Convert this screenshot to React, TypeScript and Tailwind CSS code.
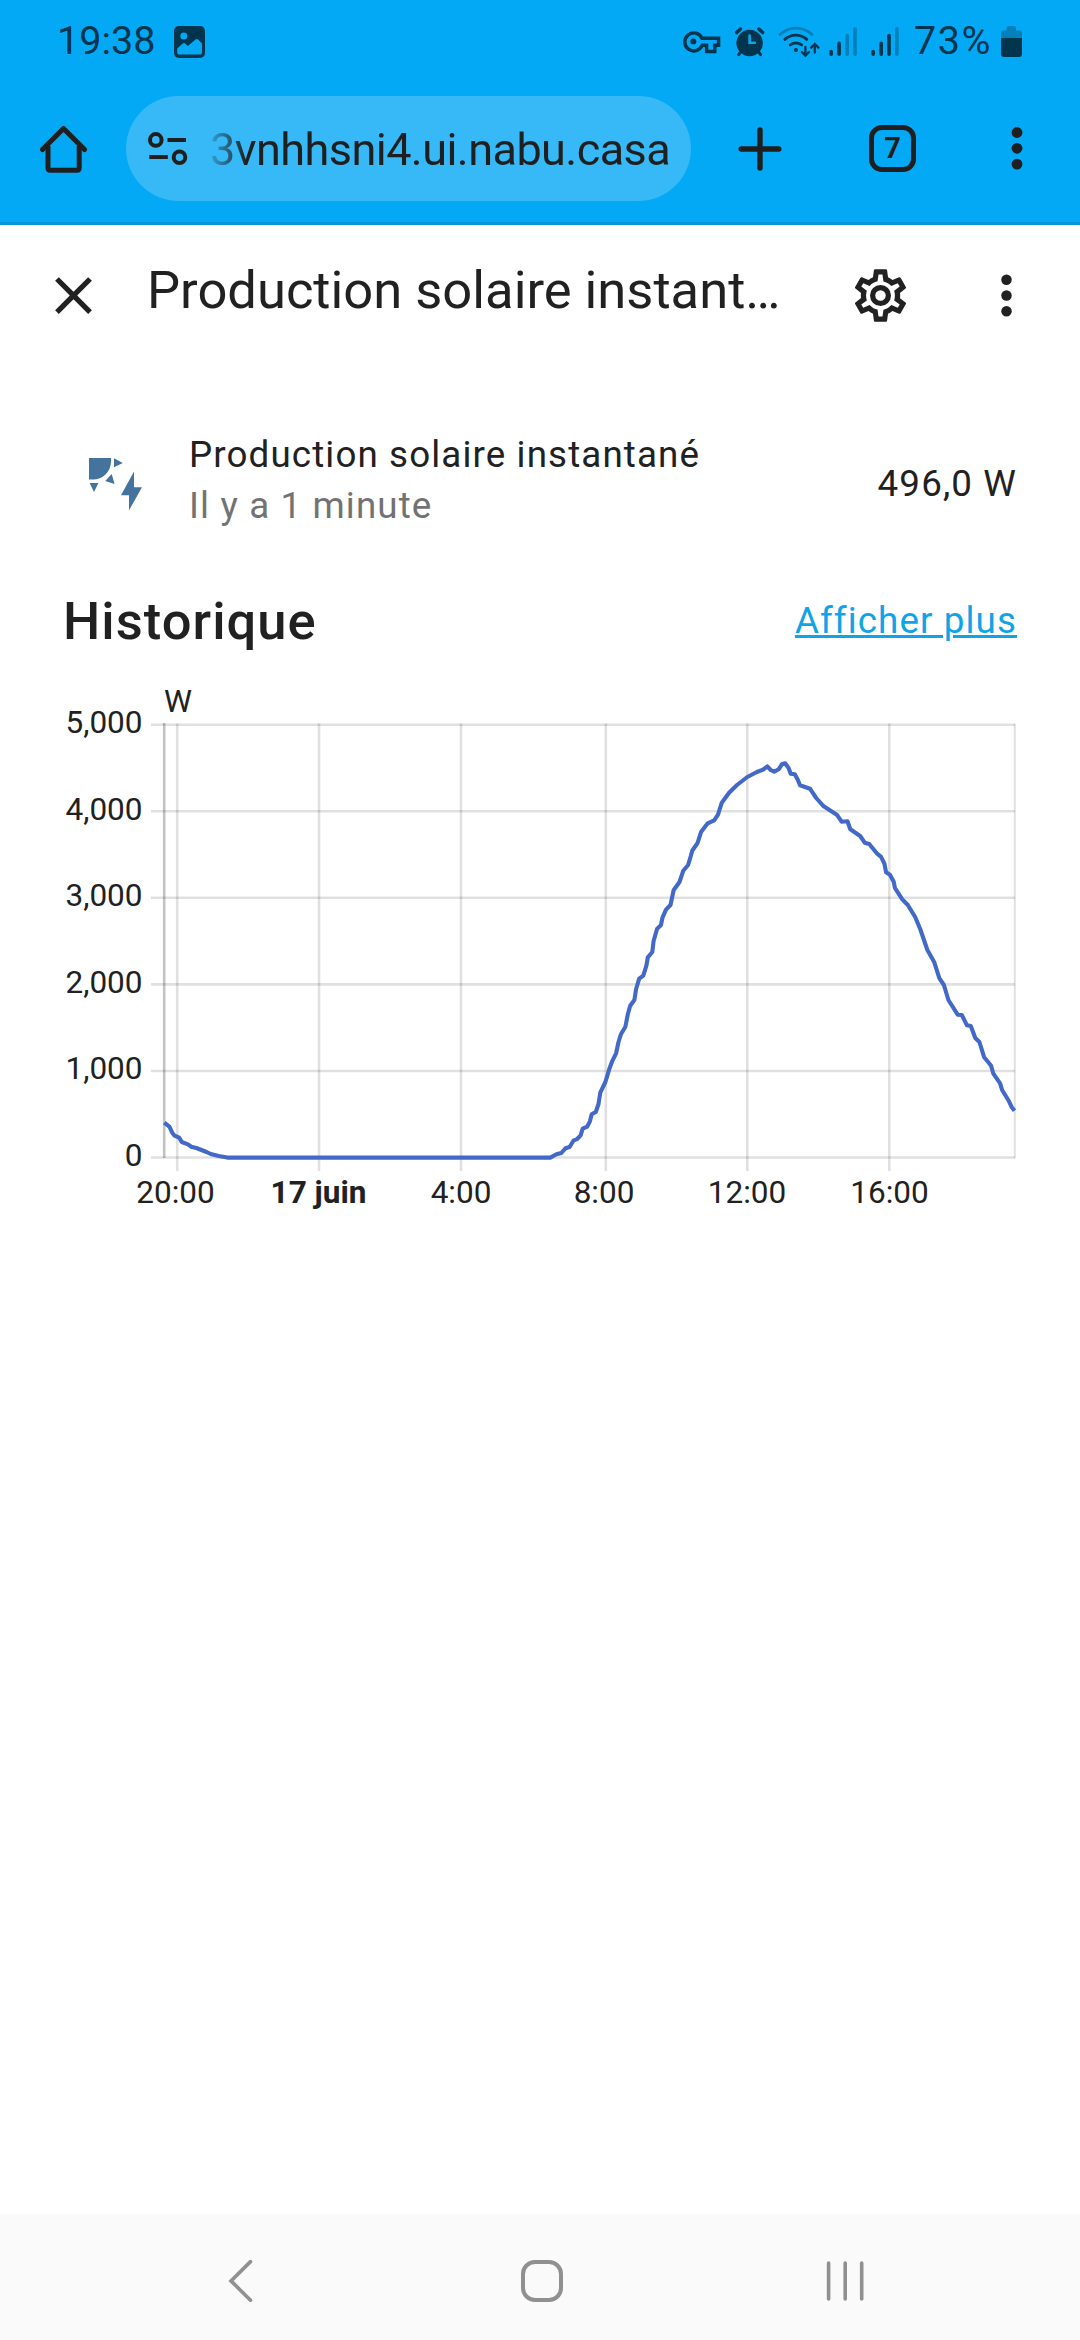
const verticalLines = [177.2, 319, 461, 605.8, 747.3, 889.3];

const yLabels = [
  { label: "5,000", y: 724.7 },
  { label: "4,000", y: 811.2 },
  { label: "3,000", y: 897.8 },
  { label: "2,000", y: 984.4 },
  { label: "1,000", y: 1071 },
  { label: "0", y: 1157.5 },
];

const xLabels = [
  { label: "20:00", x: 175.5 },
  { label: "17 juin", x: 318.5, bold: true },
  { label: "4:00", x: 461 },
  { label: "8:00", x: 604 },
  { label: "12:00", x: 747 },
  { label: "16:00", x: 889.5 },
];

const points =
  "164.3,1122.7 169.4,1126.7 172.2,1132.7 174.6,1135.7 179.1,1137.7 181.8,1142 188,1144.3 191.1,1146.7 196.3,1148 206.6,1152 210.7,1154 218.7,1156 227.3,1157.6 " +
  "550.3,1157.6 556.5,1154.3 561.3,1153 565.5,1148.3 569.6,1147 573.4,1140.7 577.2,1139 580.6,1135.3 582.7,1128.7 587.2,1126.7 589.9,1121.3 591.7,1114.3 595.8,1112 598.5,1104 600.3,1092.7 605.4,1082 " +
  "609.2,1069.3 612,1061.7 616.1,1053.3 618.5,1042 620.9,1034.3 625.4,1026.7 627.8,1014.3 630.2,1005.7 634.4,1000 636.1,989 639.2,978.7 643.3,975.7 646.4,965.7 647.8,957.3 652.3,952 653.6,941 657.1,928.7 " +
  "660.9,925.3 662.6,917.3 666,909.7 670.5,905 673.6,890.3 679.5,882 683.3,870.7 688.1,865 690.8,856 692.2,850.7 697.4,843.3 701.2,831.7 707.7,823.3 714.2,820.3 718,814.7 721.8,802.7 729.1,792.7 737,785 " +
  "747.3,777 756.9,772 763.1,769.7 767.3,766.3 770.7,770 774.2,771.7 778.6,769.3 782.1,764 785.2,763.3 788.6,768 790.7,773.7 794.8,774.3 797.9,780 800,785.3 810,788.7 816.2,798 823.7,806.3 836.8,814.7 " +
  "841.6,821.7 847.5,821.3 850.3,829.3 860.2,836 864.7,842.7 869.2,844 876.8,853.3 880.9,856.7 884.4,863.7 886.1,872.3 889.9,874.7 893.7,881.7 894.9,887.8 902.3,899.3 907.8,905 915.3,917.3 920.2,929 " +
  "927.4,950 934.3,962.3 939.4,978.3 943.9,985 948.4,1000 957.7,1014.7 961.8,1015 967,1025.3 970.8,1026 975.3,1038 979.4,1042 984.2,1057.3 991.1,1065.7 993.2,1073.3 1000.1,1083.3 1002.1,1090 1009,1101.3 1011.8,1107.3 1014.5,1110.7";

function StatusIcons() {
  return (
    <svg width="222" height="36" viewBox="680 23 222 36" fill="none" stroke="#01344d" strokeLinecap="round">
      {/* vpn key */}
      <path
        d="M702 38.2H718.6V45.2H714.8V51.5H706.6V45.2H702.2A9 9 0 1 1 702 38.2Z"
        strokeWidth="3.4"
        strokeLinecap="butt"
      />
      <circle cx="693.3" cy="41.6" r="3" fill="#01344d" stroke="none" />

      {/* alarm */}
      <circle cx="749.6" cy="43" r="13.2" fill="#01344d" stroke="none" />
      <path d="M736.6 32.6L740.4 29M762.6 32.6L758.8 29" strokeWidth="3.4" />
      <path d="M741 51.5L738.6 54.6M758.2 51.5L760.6 54.6" strokeWidth="3" />
      <path d="M749.6 35.5V42.8H754.8" stroke="#03a9f4" strokeWidth="2.6" />

      {/* wifi */}
      <path d="M780 34.6A23 23 0 0 1 812 34.6" stroke="#037fb9" strokeWidth="2.8" />
      <path d="M784.8 39.4A16.5 16.5 0 0 1 806.8 39.4" strokeWidth="2.8" />
      <path d="M790.2 44.8A9.6 9.6 0 0 1 801.6 44.8" strokeWidth="2.8" />
      <circle cx="795.9" cy="50" r="2.1" fill="#01344d" stroke="none" />
      <path d="M805.4 47V55.2M801.8 52L805.4 55.6L809 52" strokeWidth="2.3" />
      <path d="M814.8 52.6V44M811.2 47.6L814.8 44L818.4 47.6" strokeWidth="2.3" />

      {/* sim 1 */}
      <path d="M831.2 51.6V54.2M839.1 43.4V54.2" strokeWidth="3.6" />
      <path d="M847.2 35.6V54.2M855 28.8V54.2" stroke="#037fb9" strokeWidth="3.6" />

      {/* sim 2 */}
      <path d="M873.2 51.6V54.2M881.2 43.4V54.2M889 35.6V54.2" strokeWidth="3.6" />
      <path d="M896.9 28.8V54.2" stroke="#037fb9" strokeWidth="3.6" />
    </svg>
  );
}

function StatusBar() {
  return (
    <div className="flex h-[84px] items-start text-[39.5px] leading-[46px] text-[#01344d]">
      <span className="mt-[18px] ml-[57px] w-[100px]">19:38</span>
      <svg className="mt-[26px] ml-[17px]" width="31" height="32" viewBox="0 0 31 32">
        <rect width="31" height="32" rx="5" fill="#01344d" />
        <circle cx="9.8" cy="10" r="3.5" fill="#03a9f4" />
        <path
          d="M3.2 22.5L9 17.3Q10 16.5 11 17.3L13.8 20L21.6 13.4Q22.8 12.6 24 13.6L28 17.6V26Q28 28.6 25.4 28.6H5.8Q3.2 28.6 3.2 26Z"
          fill="#03a9f4"
        />
      </svg>
      <div className="mt-[23px] ml-auto h-9">
        <StatusIcons />
      </div>
      <span className="mt-[18px] ml-[12px] w-[82px] tracking-[1.6px]">73%</span>
      <svg className="mt-[26px] mr-[58px] ml-[5px]" width="21" height="31" viewBox="0 0 21 31">
        <path d="M5.5 2Q5.5 0 7.5 0H13Q15 0 15 2V4.6H18Q21 4.6 21 7.6V12H0V7.6Q0 4.6 3 4.6H5.5Z" fill="#037fb9" />
        <path d="M0 12H21V28Q21 31 18 31H3Q0 31 0 28Z" fill="#01344d" />
      </svg>
    </div>
  );
}

function AddressBar() {
  return (
    <div className="flex h-[141px] items-start text-[#1f1f1f]">
      <svg className="mt-[41px] ml-[39px]" width="49" height="48" viewBox="0 0 49 48" fill="none" stroke="#1f1f1f">
        <path d="M9 21V43Q9 45.2 11.2 45.2H38Q40.2 45.2 40.2 43V21" strokeWidth="5" />
        <path d="M3.5 24.5L24.5 3.5L45.5 24.5" strokeWidth="5" strokeLinecap="round" strokeLinejoin="round" />
      </svg>
      <div className="mt-[12px] ml-[38px] flex h-[105px] w-[565px] items-center rounded-full bg-[#36b9f6]">
        <svg className="ml-[21px]" width="41" height="34" viewBox="0 0 41 34" fill="none" stroke="#1f1f1f">
          <circle cx="8.8" cy="7.9" r="5.8" strokeWidth="4" />
          <circle cx="32.5" cy="25.2" r="5.8" strokeWidth="4" />
          <path d="M20.5 7.9H39M2.3 25H20.8" strokeWidth="4" />
        </svg>
        <span className="mt-[2px] ml-[22px] bg-linear-to-r from-[#1f1f1f]/15 via-[#1f1f1f] via-[8%] to-[#1f1f1f] bg-clip-text text-[45px] leading-[60px] tracking-[-0.55px] whitespace-nowrap text-transparent">
          3vnhhsni4.ui.nabu.casa
        </span>
      </div>
      <svg className="mt-[43px] ml-[47px]" width="44" height="44" viewBox="0 0 44 44" fill="none" stroke="#1f1f1f">
        <path d="M22 3V41M3.2 22H40.8" strokeWidth="5.4" strokeLinecap="round" />
      </svg>
      <div className="mt-[41px] ml-[87px] flex h-[47px] w-[47px] items-center justify-center rounded-[13px] border-5 border-[#1f1f1f] text-[29px] leading-none font-bold">
        7
      </div>
      <svg className="mt-[42px] mr-[57px] ml-auto" width="12" height="44" viewBox="0 0 12 44" fill="#1f1f1f">
        <circle cx="6" cy="6.5" r="5.4" />
        <circle cx="6" cy="22.3" r="5.4" />
        <circle cx="6" cy="38.1" r="5.4" />
      </svg>
    </div>
  );
}

function DialogHeader() {
  return (
    <div className="flex h-[147px] items-start">
      <svg className="mt-[39px] ml-[42px]" width="63" height="63" viewBox="0 0 24 24" fill="#212121">
        <path d="M19,6.41L17.59,5L12,10.59L6.41,5L5,6.41L10.59,12L5,17.59L6.41,19L12,13.41L17.59,19L19,17.59L13.41,12L19,6.41Z" />
      </svg>
      <h1 className="mt-[34px] ml-[42px] w-[640px] text-[52.5px] leading-[62px] whitespace-nowrap">
        Production solaire instant…
      </h1>
      <svg className="mt-[39px] ml-[62px]" width="63" height="63" viewBox="0 0 24 24" fill="#212121">
        <path d="M12,8A4,4 0 0,1 16,12A4,4 0 0,1 12,16A4,4 0 0,1 8,12A4,4 0 0,1 12,8M12,10A2,2 0 0,0 10,12A2,2 0 0,0 12,14A2,2 0 0,0 14,12A2,2 0 0,0 12,10M10,22C9.75,22 9.54,21.82 9.5,21.58L9.13,18.93C8.5,18.68 7.96,18.34 7.44,17.94L4.95,18.95C4.73,19.03 4.46,18.95 4.34,18.73L2.34,15.27C2.21,15.05 2.27,14.78 2.46,14.63L4.57,12.97L4.5,12L4.57,11L2.46,9.37C2.27,9.22 2.21,8.95 2.34,8.73L4.34,5.27C4.46,5.05 4.73,4.96 4.95,5.05L7.44,6.05C7.96,5.66 8.5,5.32 9.13,5.07L9.5,2.42C9.54,2.18 9.75,2 10,2H14C14.25,2 14.46,2.18 14.5,2.42L14.87,5.07C15.5,5.32 16.04,5.66 16.56,6.05L19.05,5.05C19.27,4.96 19.54,5.05 19.66,5.27L21.66,8.73C21.79,8.95 21.73,9.22 21.54,9.37L19.43,11L19.5,12L19.43,13L21.54,14.63C21.73,14.78 21.79,15.05 21.66,15.27L19.66,18.73C19.54,18.95 19.27,19.04 19.05,18.95L16.56,17.95C16.04,18.34 15.5,18.68 14.87,18.93L14.5,21.58C14.46,21.82 14.25,22 14,22H10M11.25,4L10.88,6.61C9.68,6.86 8.62,7.5 7.85,8.39L5.44,7.35L4.69,8.6L6.8,10.15C6.4,11.37 6.4,12.64 6.8,13.86L4.68,15.42L5.43,16.67L7.86,15.62C8.63,16.5 9.68,17.14 10.87,17.38L11.24,20H12.76L13.13,17.39C14.32,17.14 15.37,16.5 16.14,15.62L18.57,16.67L19.32,15.42L17.2,13.87C17.6,12.64 17.6,11.37 17.2,10.15L19.31,8.6L18.56,7.35L16.15,8.39C15.38,7.5 14.32,6.86 13.12,6.62L12.75,4H11.25Z" />
      </svg>
      <svg className="mt-[39px] mr-[42px] ml-auto" width="63" height="63" viewBox="0 0 24 24" fill="#212121">
        <circle cx="12" cy="6" r="2" />
        <circle cx="12" cy="12" r="2" />
        <circle cx="12" cy="18" r="2" />
      </svg>
    </div>
  );
}

function SensorRow() {
  return (
    <div className="flex h-[174px] items-start text-[36.75px] leading-[51px] tracking-[1.12px]">
      <svg className="mt-[86px] ml-[89px]" width="53" height="54" viewBox="0 0 53 54" fill="#44739e">
        <path d="M0 0H22V4A18 18 0 0 1 4 21.5H0Z" />
        <path d="M25 .3L33.8 5L25 9.3ZM.6 25H9.4L5 34ZM22.7 16L25.6 26L16.2 23Z" />
        <path d="M45 13.5V29.2H53L40 52.4V37.2H32Z" />
      </svg>
      <div className="mt-[57px] ml-[47px] flex flex-col">
        <span>Production solaire instantané</span>
        <span className="text-[#727272]">Il y a 1 minute</span>
      </div>
      <span className="mt-[86px] mr-[63px] ml-auto">496,0 W</span>
    </div>
  );
}

function HistoryChart() {
  return (
    <svg width="1080" height="540" viewBox="0 680 1080 540" fill="#212121" fontSize="31.5">
      <g stroke="#000" strokeOpacity="0.12" strokeWidth="2.6">
        {yLabels.map((row) => (
          <line key={row.label} x1="151" x2="1015" y1={row.y} y2={row.y} />
        ))}
        {verticalLines.map((x) => (
          <line key={x} x1={x} x2={x} y1="723.4" y2="1171" />
        ))}
        <line x1="1014.8" x2="1014.8" y1="723.4" y2="1158" strokeWidth="2" />
        <line x1="164.2" x2="164.2" y1="723" y2="1158" strokeOpacity="0.24" />
      </g>
      <polyline points={points} fill="none" stroke="#4269c8" strokeWidth="4.1" strokeLinejoin="round" />
      <text x="178" y="712" textAnchor="middle">
        W
      </text>
      {yLabels.map((row) => (
        <text key={row.label} x="142.5" y={row.y + 8.3} textAnchor="end">
          {row.label}
        </text>
      ))}
      {xLabels.map((tick) => (
        <text key={tick.label} x={tick.x} y="1202.6" textAnchor="middle" fontWeight={tick.bold ? 700 : 400}>
          {tick.label}
        </text>
      ))}
    </svg>
  );
}

function NavBar() {
  return (
    <div className="flex h-[126px] items-start bg-[#fafafa]">
      <svg className="mt-[45px] ml-[228px]" width="25" height="44" viewBox="0 0 25 44" fill="none" stroke="#909090">
        <path d="M22.5 2.6L3 21.9L22.5 41.2" strokeWidth="3.6" strokeLinecap="round" />
      </svg>
      <div className="mt-[46px] ml-[268px] h-[42px] w-[42px] rounded-[14px] border-4 border-[#909090]" />
      <svg className="mt-[46px] ml-[262px]" width="42" height="42" viewBox="0 0 42 42" stroke="#909090">
        <path d="M3.6 3V39M20.2 3V39M36.7 3V39" strokeWidth="3.6" strokeLinecap="round" />
      </svg>
    </div>
  );
}

export default function App() {
  return (
    <div className="flex h-[2340px] w-[1080px] flex-col overflow-hidden bg-white font-[Roboto,sans-serif] text-[#212121]">
      <div className="h-[225px] border-b-3 border-[#0a95d8] bg-[#03a9f4]">
        <StatusBar />
        <AddressBar />
      </div>
      <DialogHeader />
      <SensorRow />
      <div className="flex h-[134px] items-start justify-between px-[63px]">
        <h2 className="mt-[44px] text-[52.5px] leading-[62px] font-medium tracking-[1.05px]">Historique</h2>
        <a className="mt-[49px] text-[36.75px] leading-[52px] tracking-[1.1px] text-[#0fa3e8] underline">
          Afficher plus
        </a>
      </div>
      <HistoryChart />
      <div className="flex-1" />
      <NavBar />
    </div>
  );
}
